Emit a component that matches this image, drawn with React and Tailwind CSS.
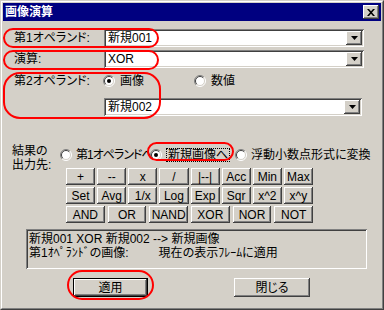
import React from 'react';

const raised =
  'bg-[#d4d0c8] shadow-[inset_-1px_-1px_#404040,inset_1px_1px_#ffffff,inset_-2px_-2px_#808080,inset_2px_2px_#d4d0c8]';
const sunken =
  'shadow-[inset_1px_1px_#808080,inset_-1px_-1px_#ffffff,inset_2px_2px_#404040,inset_-2px_-2px_#d4d0c8]';

function Combo({ value, className = '' }) {
  return (
    <div className={`flex h-[18px] bg-white p-[2px] ${sunken} ${className}`}>
      <div className="flex-1 pl-[2px] leading-[14px]">{value}</div>
      <div className={`flex h-[14px] w-[16px] items-center justify-center ${raised}`}>
        <svg width="7" height="4" viewBox="0 0 7 4">
          <path d="M0 0h7L3.5 4z" fill="#000" />
        </svg>
      </div>
    </div>
  );
}

function Radio({ on }) {
  return (
    <svg width="12" height="12" viewBox="0 0 12 12" className="shrink-0">
      <circle cx="6" cy="6" r="5" fill="#fff" />
      <path d="M2.1 9.9A5.5 5.5 0 0 1 9.9 2.1" stroke="#808080" fill="none" />
      <path d="M9.9 2.1A5.5 5.5 0 0 1 2.1 9.9" stroke="#fff" fill="none" />
      <path d="M2.8 9.2A4.5 4.5 0 0 1 9.2 2.8" stroke="#404040" fill="none" />
      <path d="M9.2 2.8A4.5 4.5 0 0 1 2.8 9.2" stroke="#d4d0c8" fill="none" />
      {on && <circle cx="6" cy="6" r="2" fill="#000" />}
    </svg>
  );
}

function Btn({ children }) {
  return (
    <div className={`flex h-[17px] items-center justify-center leading-[14px] ${raised}`}>
      {children}
    </div>
  );
}

const ops1 = ['+', '--', 'x', '/', '|--|', 'Acc', 'Min', 'Max'];
const ops2 = ['Set', 'Avg', '1/x', 'Log', 'Exp', 'Sqr', 'x^2', 'x^y'];
const ops3 = ['AND', 'OR', 'NAND', 'XOR', 'NOR', 'NOT'];

export default function App() {
  return (
    <div className="relative h-[310px] w-[384px] font-['Liberation_Sans','Noto_Sans_CJK_JP',sans-serif] text-[12px] text-black [font-feature-settings:'palt']">
      <div className="h-full border border-b-[#404040] border-l-[#d4d0c8] border-r-[#404040] border-t-[#d4d0c8]">
        <div className="flex h-full flex-col border border-b-[#808080] border-l-white border-r-[#808080] border-t-white bg-[#d4d0c8] p-[1px]">
          {/* title bar */}
          <div className="flex h-[18px] items-center bg-[#000080] pl-[2px] pr-[2px]">
            <span className="flex-1 font-bold leading-[14px] text-white">画像演算</span>
            <div className={`flex h-[14px] w-[16px] items-center justify-center ${raised}`}>
              <svg width="8" height="7" viewBox="0 0 8 7">
                <path d="M0 0h2l2 2.2L6 0h2L5 3.5 8 7H6L4 4.8 2 7H0l3-3.5z" fill="#000" />
              </svg>
            </div>
          </div>

          {/* operand 1 */}
          <div className="mt-[8px] flex h-[18px] items-center">
            <div className="w-[101px] pl-[11px] leading-[14px]">第1オペランド:</div>
            <Combo value="新規001" className="w-[260px]" />
          </div>

          {/* operation */}
          <div className="mt-[3px] flex h-[18px] items-center">
            <div className="w-[101px] pl-[11px] leading-[14px]">演算:</div>
            <Combo value="XOR" className="w-[260px]" />
          </div>

          {/* operand 2 */}
          <div className="mt-[6px] flex h-[14px] items-center leading-[14px]">
            <div className="w-[100px] pl-[11px]">第2オペランド:</div>
            <div className="flex w-[91px] items-center gap-[5px]">
              <Radio on />
              <span>画像</span>
            </div>
            <div className="flex items-center gap-[5px]">
              <Radio />
              <span>数値</span>
            </div>
          </div>
          <div className="mt-[10px] flex h-[18px]">
            <div className="w-[101px]" />
            <Combo value="新規002" className="w-[258px]" />
          </div>

          {/* output destination + buttons */}
          <div className="mt-[28px] flex">
            <div className="w-[57px] pl-[9px] leading-[14px]">
              結果の
              <br />
              出力先:
            </div>
            <div className="flex flex-1 flex-col">
              <div className="mt-[4px] flex h-[14px] items-center leading-[14px]">
                <div className="flex w-[90px] items-center gap-[4px] whitespace-nowrap">
                  <Radio />
                  <span className="tracking-[-1px]">第1オペランドへ</span>
                </div>
                <div className="flex w-[85px] items-center gap-[4px] whitespace-nowrap">
                  <Radio on />
                  <span className="border border-dotted border-black px-[1px] leading-[12px]">新規画像へ</span>
                </div>
                <div className="flex items-center gap-[4px] whitespace-nowrap">
                  <Radio />
                  <span>浮動小数点形式に変換</span>
                </div>
              </div>
              <div className="ml-[6px] mt-[6px] flex w-[247px] flex-col gap-[2px]">
                <div className="grid grid-cols-8 gap-[2px]">
                  {ops1.map((o) => (
                    <Btn key={o}>{o}</Btn>
                  ))}
                </div>
                <div className="grid grid-cols-8 gap-[2px]">
                  {ops2.map((o) => (
                    <Btn key={o}>{o}</Btn>
                  ))}
                </div>
                <div className="grid grid-cols-6 gap-[3px]">
                  {ops3.map((o) => (
                    <Btn key={o}>{o}</Btn>
                  ))}
                </div>
              </div>
            </div>
          </div>

          {/* status box */}
          <div className={`ml-[23px] mt-[6px] h-[40px] w-[341px] pl-[3px] pt-[3px] leading-[14px] ${sunken}`}>
            <div>新規001 XOR 新規002 --&gt; 新規画像</div>
            <div className="flex">
              <span>第1ｵﾍﾟﾗﾝﾄﾞの画像:</span>
              <span className="w-[30px]" />
              <span>現在の表示ﾌﾚｰﾑに適用</span>
            </div>
          </div>

          {/* bottom buttons */}
          <div className="mt-[9px] flex">
            <div className="ml-[70px] h-[19px] w-[75px] border border-black">
              <div className={`flex h-full items-center justify-center leading-[14px] ${raised}`}>適用</div>
            </div>
            <div className={`ml-[86px] flex h-[19px] w-[76px] items-center justify-center leading-[14px] ${raised}`}>
              閉じる
            </div>
          </div>
        </div>
      </div>

      {/* red annotation marks */}
      <svg className="pointer-events-none absolute left-0 top-0" width="384" height="310" viewBox="0 0 384 310">
        <g fill="none" stroke="#ff0000" strokeWidth="2">
          <rect x="4" y="29" width="154" height="18" rx="9" />
          <rect x="4" y="51" width="154" height="18" rx="9" />
          <rect x="4" y="73" width="156" height="45" rx="16" />
          <rect x="148" y="143" width="85" height="17" rx="8.5" />
          <rect x="68" y="271" width="85" height="28" rx="14" />
        </g>
      </svg>
    </div>
  );
}
